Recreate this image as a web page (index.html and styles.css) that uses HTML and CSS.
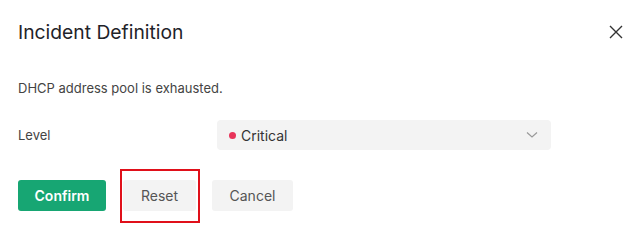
FILE: index.html
```html
<!DOCTYPE html>
<html>
<head>
<meta charset="utf-8">
<link rel="stylesheet" href="styles.css">
</head>
<body>
<div class="dialog">
  <div class="header">
    <div class="title">Incident Definition</div>
    <svg class="close" width="14" height="14" viewBox="0 0 14 14"><path d="M1 1L13 13M13 1L1 13" stroke="#333" stroke-width="1.4" fill="none"/></svg>
  </div>
  <div class="desc">DHCP address pool is exhausted.</div>
  <div class="row">
    <div class="label">Level</div>
    <div class="select">
      <span class="dot"></span>
      <span class="value">Critical</span>
      <svg class="chev" width="12" height="8" viewBox="0 0 12 8"><path d="M1 1.5L6 6L11 1.5" stroke="#999" stroke-width="1.2" fill="none"/></svg>
    </div>
  </div>
  <div class="actions">
    <button class="btn primary">Confirm</button>
    <div class="reset-wrap">
      <button class="btn">Reset</button>
      <div class="highlight"></div>
    </div>
    <button class="btn">Cancel</button>
  </div>
</div>
</body>
</html>
```
FILE: styles.css
```css
html, body { margin: 0; padding: 0; background: #fff; }
body { width: 642px; height: 240px; overflow: hidden; font-family: Inter, "Noto Sans", sans-serif; color: #333; }
.dialog { padding: 20px 18px 0 18px; }
.header { display: flex; justify-content: space-between; align-items: center; height: 24px; }
.title { font-size: 19.3px; color: #1f2329; }
.close { margin-right: 1px; }
.desc { margin-top: 36px; font-size: 13px; color: #444; line-height: 16px; }
.row { display: flex; align-items: center; margin-top: 24px; }
.label { width: 199px; font-size: 13px; color: #444; }
.select { width: 334px; height: 30px; background: #f3f3f3; border-radius: 4px; display: flex; align-items: center; padding: 0 12px; box-sizing: border-box; }
.dot { width: 7px; height: 7px; border-radius: 50%; background: #e8345a; margin-right: 5px; }
.value { font-size: 14px; color: #333; flex: 1; }
.chev { margin-right: 1px; }
.actions { display: flex; align-items: center; margin-top: 30px; gap: 0; }
.btn { font-family: inherit; border: none; border-radius: 3px; height: 31px; font-size: 14px; background: #f3f3f3; color: #555; padding: 0; }
.primary { width: 88px; background: #17a673; color: #fff; font-weight: 600; }
.reset-wrap { position: relative; margin-left: 17px; }
.reset-wrap .btn { width: 73px; }
.highlight { position: absolute; left: -3px; top: -11px; width: 76px; height: 50px; border: 2px solid #e0101a; }
.actions > .btn:last-child { margin-left: 16px; width: 81px; }
```
